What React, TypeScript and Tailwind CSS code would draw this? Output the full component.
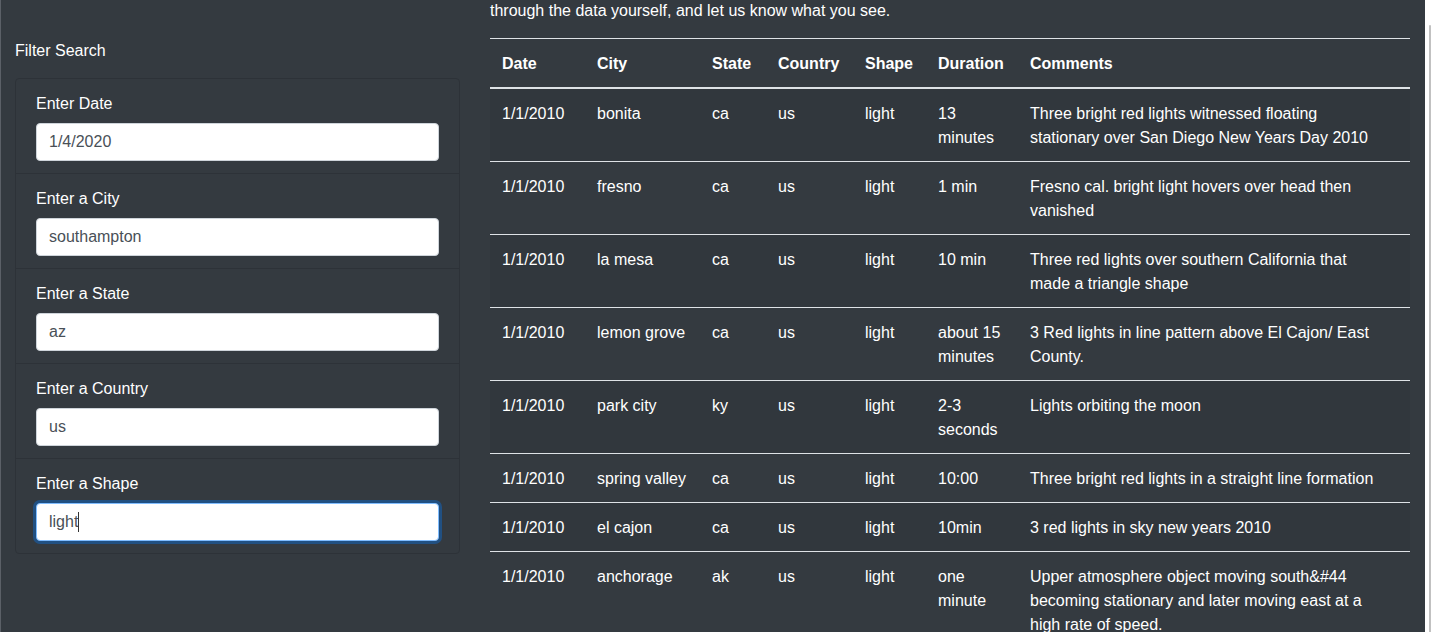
import React from 'react';

type Sighting = {
  date: string;
  city: string;
  state: string;
  country: string;
  shape: string;
  duration: string;
  comments: string;
};

const sightings: Sighting[] = [
  { date: '1/1/2010', city: 'bonita', state: 'ca', country: 'us', shape: 'light', duration: '13 minutes', comments: 'Three bright red lights witnessed floating stationary over San Diego New Years Day 2010' },
  { date: '1/1/2010', city: 'fresno', state: 'ca', country: 'us', shape: 'light', duration: '1 min', comments: 'Fresno cal. bright light hovers over head then vanished' },
  { date: '1/1/2010', city: 'la mesa', state: 'ca', country: 'us', shape: 'light', duration: '10 min', comments: 'Three red lights over southern California that made a triangle shape' },
  { date: '1/1/2010', city: 'lemon grove', state: 'ca', country: 'us', shape: 'light', duration: 'about 15 minutes', comments: '3 Red lights in line pattern above El Cajon/ East County.' },
  { date: '1/1/2010', city: 'park city', state: 'ky', country: 'us', shape: 'light', duration: '2-3 seconds', comments: 'Lights orbiting the moon' },
  { date: '1/1/2010', city: 'spring valley', state: 'ca', country: 'us', shape: 'light', duration: '10:00', comments: 'Three bright red lights in a straight line formation' },
  { date: '1/1/2010', city: 'el cajon', state: 'ca', country: 'us', shape: 'light', duration: '10min', comments: '3 red lights in sky new years 2010' },
  { date: '1/1/2010', city: 'anchorage', state: 'ak', country: 'us', shape: 'light', duration: 'one minute', comments: 'Upper atmosphere object moving south&#44 becoming stationary and later moving east at a high rate of speed.' },
];

const filters = [
  { label: 'Enter Date', value: '1/4/2020' },
  { label: 'Enter a City', value: 'southampton' },
  { label: 'Enter a State', value: 'az' },
  { label: 'Enter a Country', value: 'us' },
];

const FilterItem: React.FC<{ label: string; value: string }> = ({ label, value }) => (
  <li className="px-5 py-3 border-b border-[#2d3238]">
    <label className="block mb-2 text-white leading-6 pt-px">{label}</label>
    <input
      readOnly
      value={value}
      className="block w-full h-[38px] -mt-px px-3 rounded bg-white border border-[#ced4da] text-[#495057] leading-6 outline-none"
    />
  </li>
);

export default function App() {
  return (
    <div className="flex h-[632px] overflow-hidden text-base" style={{ fontFamily: '"Liberation Sans", Arial, sans-serif' }}>
      <div className="flex flex-1 bg-[#343a40] border-l border-[#5b6067]">
        {/* filters */}
        <div className="w-[474px] pl-[14px] pr-[15px] pt-[39px]">
          <p className="text-white leading-6 mb-[15px]">Filter Search</p>
          <ul className="border border-[#2d3238] rounded">
            {filters.map((f) => (
              <FilterItem key={f.label} label={f.label} value={f.value} />
            ))}
            <li className="px-5 py-3">
              <label className="block mb-2 text-white leading-6 pt-px">Enter a Shape</label>
              <div className="flex items-center w-full h-[38px] -mt-px px-3 rounded bg-white border border-[#80bdff] shadow-[0_0_0_3px_rgba(0,123,255,0.35)] text-[#495057] leading-6">
                <span>light</span>
                <span className="w-px h-5 bg-[#333]" />
              </div>
            </li>
          </ul>
        </div>

        {/* results */}
        <div className="w-[950px] px-[15px]">
          <p className="text-white leading-6 -mt-px mb-[15px]">through the data yourself, and let us know what you see.</p>
          <table className="w-full table-fixed border-collapse text-white">
            <colgroup>
              <col className="w-[95px]" />
              <col className="w-[115px]" />
              <col className="w-[66px]" />
              <col className="w-[87px]" />
              <col className="w-[73px]" />
              <col className="w-[92px]" />
              <col />
            </colgroup>
            <thead>
              <tr>
                {['Date', 'City', 'State', 'Country', 'Shape', 'Duration', 'Comments'].map((h) => (
                  <th key={h} className="px-3 pt-[13px] pb-[11px] text-left font-bold leading-6 align-bottom border-t border-b-2 border-t-[#dee2e6] border-b-[#dee2e6]">
                    {h}
                  </th>
                ))}
              </tr>
            </thead>
            <tbody>
              {sightings.map((s, i) => (
                <tr key={s.city} className={i % 2 === 0 ? 'bg-[#31373d]' : ''}>
                  {[s.date, s.city, s.state, s.country, s.shape, s.duration].map((v, j) => (
                    <td key={j} className="px-3 pt-[13px] pb-[11px] leading-6 align-top border-t border-[#dee2e6]">
                      {v}
                    </td>
                  ))}
                  <td className="pl-3 pr-[30px] pt-[13px] pb-[11px] leading-6 align-top border-t border-[#dee2e6]">{s.comments}</td>
                </tr>
              ))}
            </tbody>
          </table>
        </div>
      </div>

      {/* scrollbar */}
      <div className="w-[6px] bg-white pl-1 pt-[25px]">
        <div className="w-[2px] h-full bg-[#c1c1c1] rounded-t" />
      </div>
    </div>
  );
}
